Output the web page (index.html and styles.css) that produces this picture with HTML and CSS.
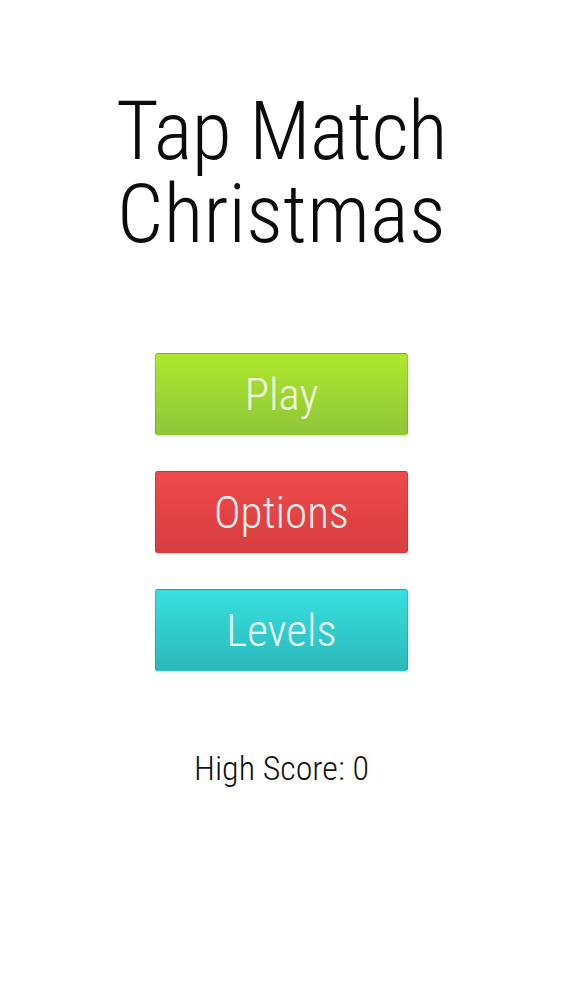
FILE: index.html
```html
<!DOCTYPE html>
<html>
<head>
<meta charset="utf-8">
<link rel="stylesheet" href="styles.css">
</head>
<body>
<main class="screen">
  <h1 class="title"><span class="title-line">Tap Match</span><span class="title-line title-line-wide">Christmas</span></h1>
  <nav class="menu">
    <div class="btn btn-play">Play</div>
    <div class="btn btn-options">Options</div>
    <div class="btn btn-levels">Levels</div>
  </nav>
  <p class="score">High Score: 0</p>
</main>
</body>
</html>
```
FILE: styles.css
```css
html, body {
  margin: 0;
  padding: 0;
  background: #ffffff;
}
.screen {
  width: 563px;
  height: 1000px;
  display: flex;
  flex-direction: column;
  align-items: center;
  font-family: "Roboto Condensed", "Liberation Sans Narrow", "DejaVu Sans Condensed", "Liberation Sans", sans-serif;
  font-stretch: condensed;
}
.title {
  margin: 90px 0 0 0;
  font-size: 82px;
  font-weight: 300;
  letter-spacing: -0.5px;
  text-align: center;
  color: #0b0b0b;
  display: flex;
  flex-direction: column;
  align-items: center;
}
.title-line {
  display: block;
  height: 83px;
  line-height: 83px;
}
.title-line-wide {
  letter-spacing: 0.3px;
}
.menu {
  margin-top: 97px;
  display: flex;
  flex-direction: column;
  gap: 36px;
}
.btn {
  width: 251px;
  height: 80px;
  border: 1px solid rgba(0,0,0,0.12);
  border-radius: 3px;
  display: flex;
  align-items: center;
  justify-content: center;
  font-size: 45px;
  font-weight: 300;
  color: #f6fbe6;
  box-shadow: 0 1px 2px rgba(0,0,0,0.18);
}
.btn-play {
  background: linear-gradient(#aee82b, #8ec53a);
}
.btn-options {
  background: linear-gradient(#ef4a4a, #d63e40);
  color: #fdf1ee;
}
.btn-levels {
  background: linear-gradient(#38dfe0, #2bb8ba);
  color: #effcfc;
}
.score {
  margin: 77px 0 0 0;
  font-size: 34px;
  font-weight: 300;
  color: #111111;
}
```
